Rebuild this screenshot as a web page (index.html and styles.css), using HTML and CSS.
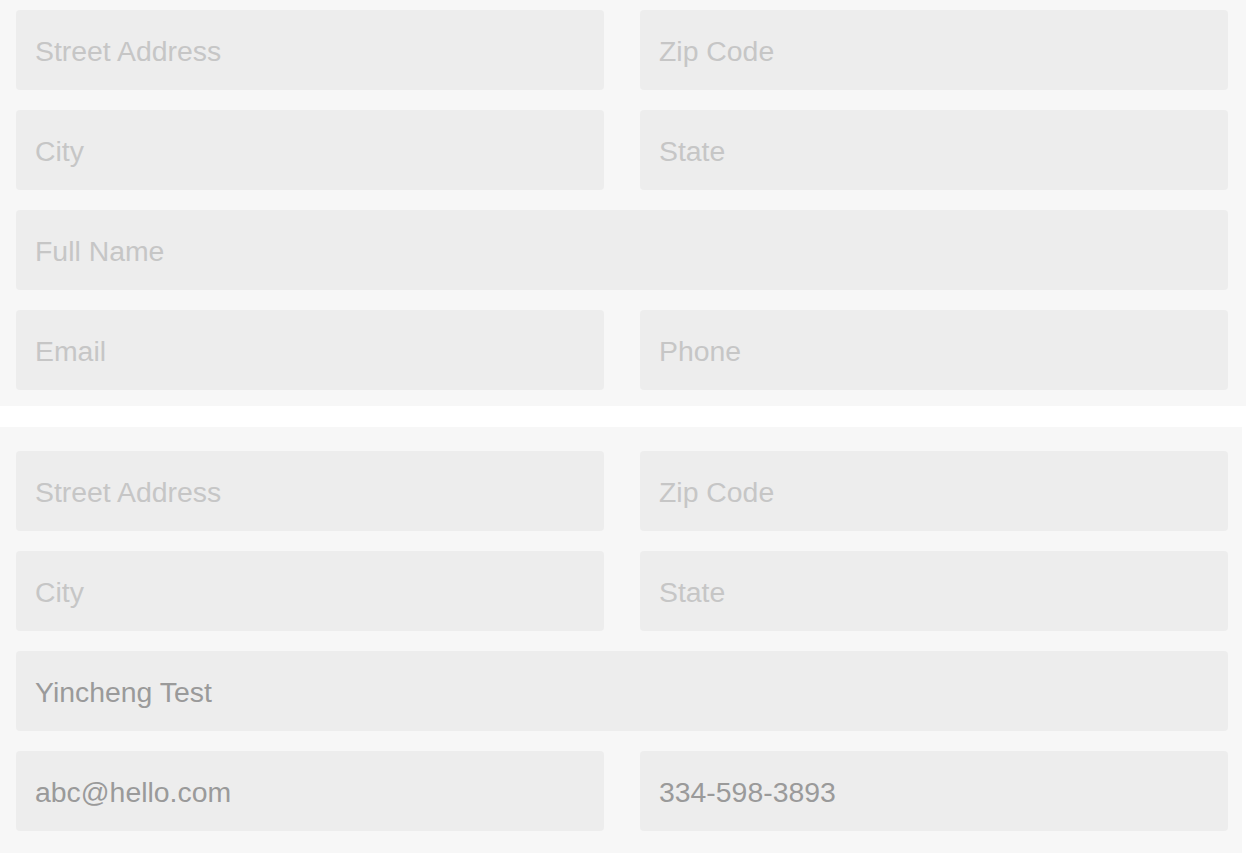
FILE: index.html
```html
<html>

<head>
	<link rel="stylesheet" href="styles.css">
</head>

<body>
	<form class="address-form form-top">
		<input class="field" type="text" placeholder="Street Address" />
		<input class="field" type="text" placeholder="Zip Code" />
		<input class="field" type="text" placeholder="City" />
		<input class="field" type="text" placeholder="State" />
		<input class="field field-wide" type="text" placeholder="Full Name" />
		<input class="field" type="email" placeholder="Email" />
		<input class="field" type="tel" placeholder="Phone" />
	</form>
	<form class="address-form form-bottom">
		<input class="field" type="text" placeholder="Street Address" />
		<input class="field" type="text" placeholder="Zip Code" />
		<input class="field" type="text" placeholder="City" />
		<input class="field" type="text" placeholder="State" />
		<input class="field field-wide" type="text" placeholder="Full Name" value="Yincheng Test" />
		<input class="field" type="email" placeholder="Email" value="abc@hello.com" />
		<input class="field" type="tel" placeholder="Phone" value="334-598-3893" />
	</form>
</body>

</html>
```

FILE: styles.css
```css
body {
	margin: 0;
	background: white;
	font-family: Helvetica, "Liberation Sans", Arial, sans-serif;
}

.address-form {
	display: grid;
	grid-template-columns: 588px 588px;
	gap: 20px 36px;
	background: #f7f7f7;
	margin: 0;
}

.form-top {
	width: 1246px;
	padding: 10px 0 16px 16px;
	box-sizing: border-box;
}

.form-bottom {
	width: 1242px;
	margin-top: 21px;
	padding: 24px 0 24px 16px;
	box-sizing: border-box;
}

.field {
	height: 80px;
	box-sizing: border-box;
	border: none;
	border-radius: 4px;
	background: #ededed;
	padding: 2px 19px 0;
	font-family: inherit;
	font-size: 28.4px;
	color: #9a9a9a;
	outline: none;
}

.field::placeholder {
	color: #c6c6c6;
}

.field-wide {
	grid-column: 1 / 3;
}
```
